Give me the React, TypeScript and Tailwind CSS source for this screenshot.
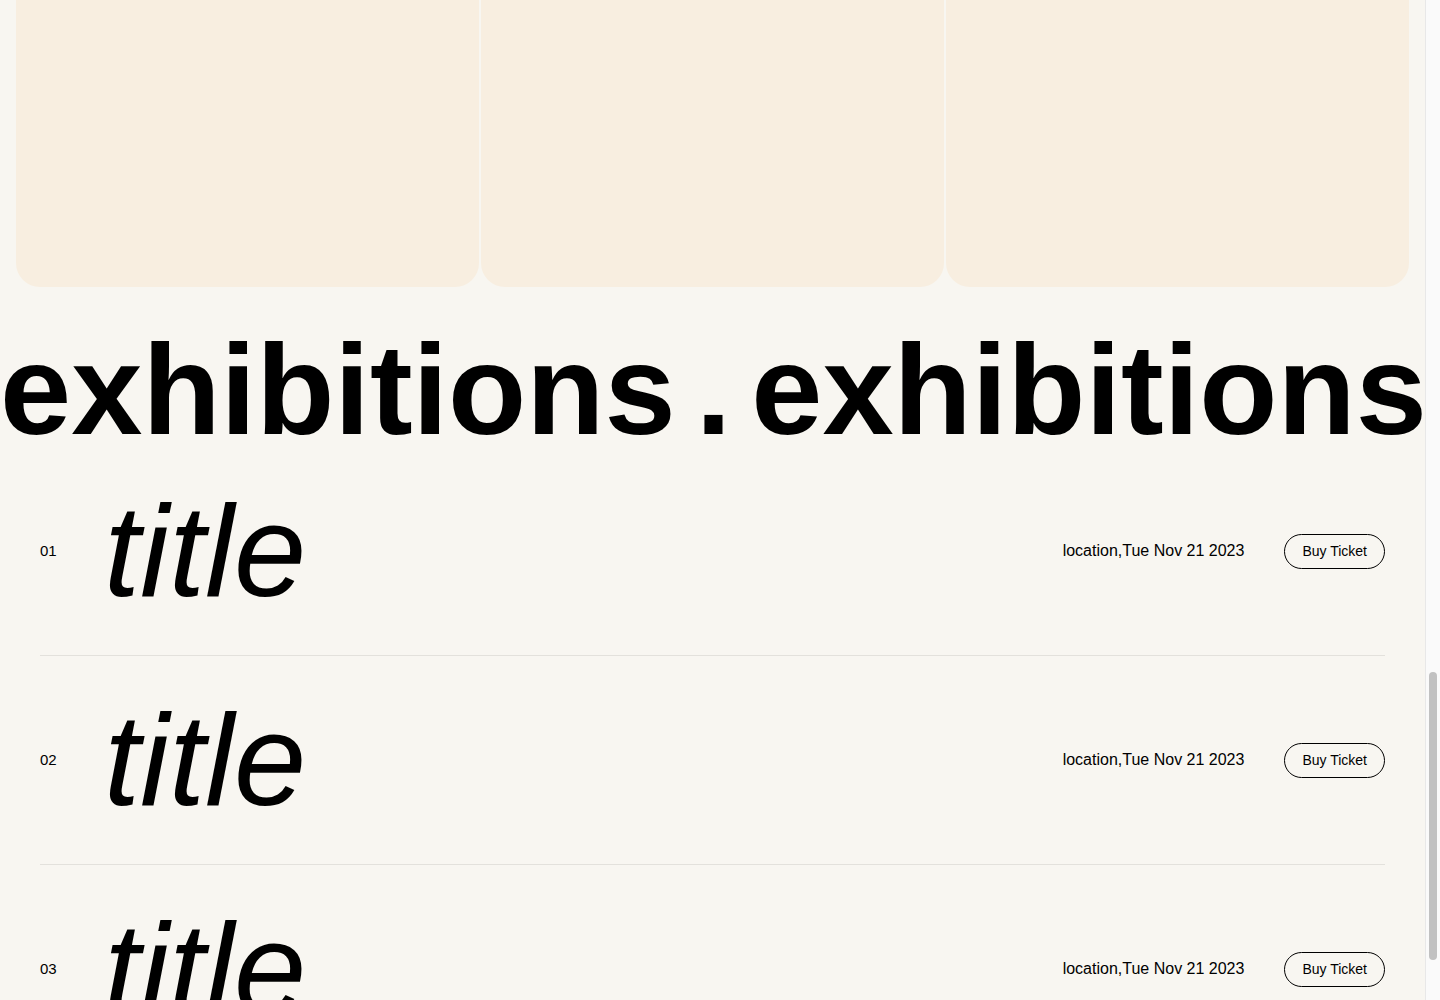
const exhibitions = [
  { id: '01', title: 'title', place: 'location', date: 'Tue Nov 21 2023' },
  { id: '02', title: 'title', place: 'location', date: 'Tue Nov 21 2023' },
  { id: '03', title: 'title', place: 'location', date: 'Tue Nov 21 2023' },
  { id: '04', title: 'title', place: 'location', date: 'Tue Nov 21 2023' },
];

function ExhibitionRow({ item }: { item: (typeof exhibitions)[number] }) {
  return (
    <div className="flex h-[209px] items-center border-b border-[#e3e1dc] text-black">
      <span className="w-16 shrink-0 text-[15px]">{item.id}</span>
      <h3 className="flex-1 text-[130px] italic leading-none">{item.title}</h3>
      <span className="text-base">
        {item.place},{item.date}
      </span>
      <button className="ml-10 flex h-[35px] items-center rounded-full border border-black px-[17px] text-sm">
        Buy Ticket
      </button>
    </div>
  );
}

function App() {
  return (
    <div className="flex min-h-screen bg-[#f8f6f1] font-['Liberation_Sans',Arial,sans-serif]">
      <main className="min-w-0 flex-1">
        <div className="grid grid-cols-3 gap-[2px] px-4">
          <div className="h-[287px] rounded-b-3xl bg-[#f8eee0]" />
          <div className="h-[287px] rounded-b-3xl bg-[#f8eee0]" />
          <div className="h-[287px] rounded-b-3xl bg-[#f8eee0]" />
        </div>

        <div className="flex h-[160px] gap-5 overflow-hidden whitespace-nowrap pt-[39px] text-9xl font-bold leading-none text-black">
          <span>exhibitions</span>
          <span>.</span>
          <span>exhibitions</span>
          <span>.</span>
          <span>exhibitions</span>
        </div>

        <div className="px-10 pb-24">
          {exhibitions.map((item) => (
            <ExhibitionRow key={item.id} item={item} />
          ))}
        </div>
      </main>

      {/* page scrollbar as seen in the capture */}
      <div className="flex w-[15px] shrink-0 justify-center border-l border-[#e8e8e8] bg-[#fafafa]">
        <div className="mt-[672px] h-[288px] w-2 rounded-full bg-[#c1c1c1]" />
      </div>
    </div>
  );
}

export default App;
